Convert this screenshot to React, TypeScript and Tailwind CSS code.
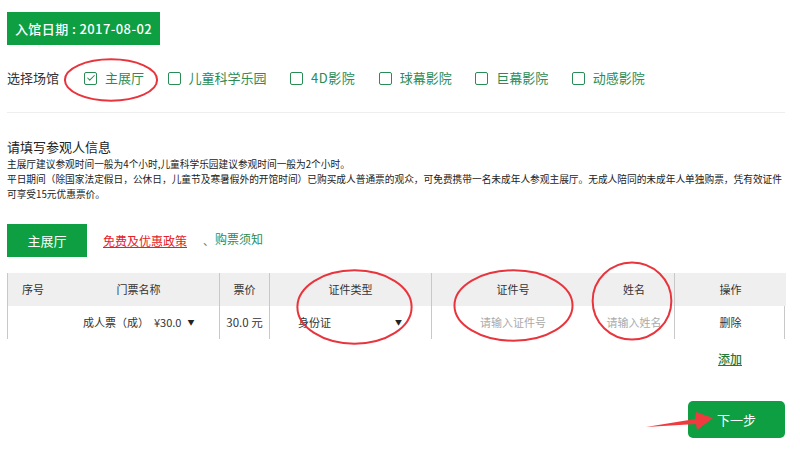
import { Check } from "lucide-react";

const halls = ["主展厅", "儿童科学乐园", "4D影院", "球幕影院", "巨幕影院", "动感影院"];

function Ring({ className }: { className: string }) {
  return (
    <svg className={`absolute pointer-events-none ${className}`} viewBox="0 0 100 100" preserveAspectRatio="none" fill="none">
      <ellipse cx="50" cy="50" rx="48" ry="47" stroke="#e8343c" strokeWidth="2" vectorEffect="non-scaling-stroke" />
    </svg>
  );
}

function Cell({ children, className = "" }: { children?: React.ReactNode; className?: string }) {
  return <div className={`flex items-center ${className}`}>{children}</div>;
}

export default function App() {
  return (
    <div className="relative w-[800px] h-[456px] overflow-hidden bg-white pl-[7px] pr-[15px] pt-3 text-[#333] font-['Noto_Sans_CJK_SC','Liberation_Sans',sans-serif]">
      <div className="flex h-[33px] w-[153px] items-center justify-center bg-[#0d9f42] text-[13px] font-medium tracking-[0.4px] text-white">
        入馆日期 : 2017-08-02
      </div>

      <div className="mt-[23px] flex h-[20px] items-center text-[13px]">
        <span className="mr-[25px]">选择场馆</span>
        <div className="flex items-center gap-x-[23.5px] text-[#2a8c55]">
          {halls.map((h, i) => (
            <label key={h} className={`flex items-center gap-[8px] ${i === 2 ? "tracking-[0.5px]" : ""}`}>
              <span className="flex h-[13px] w-[13px] items-center justify-center rounded-[2px] border border-[#2a8c55]">
                {i === 0 && <Check size={10} strokeWidth={2.5} />}
              </span>
              {h}
            </label>
          ))}
        </div>
      </div>

      <div className="mt-[24px] h-px bg-[#eeeeee]" />

      <h3 className="mt-[25px] h-[18px] text-[13px] leading-[18px] text-[#222]">请填写参观人信息</h3>
      <p className="mt-[1px] whitespace-nowrap text-[9.7px] leading-[15px] text-[#222]">
        主展厅建议参观时间一般为4个小时,儿童科学乐园建议参观时间一般为2个小时。
        <br />
        平日期间（除国家法定假日，公休日，儿童节及寒暑假外的开馆时间）已购买成人普通票的观众，可免费携带一名未成年人参观主展厅。无成人陪同的未成年人单独购票，凭有效证件
        <br />
        可享受15元优惠票价。
      </p>

      <div className="mt-[22px] flex h-[33px] items-center text-[12px]">
        <div className="flex h-full w-[80px] items-center justify-center bg-[#0d9f42] text-[13px] text-white">主展厅</div>
        <a className="ml-[16px] text-[#e4212b] underline">免费及优惠政策</a>
        <span className="ml-[16px] text-[11px] text-[#666]">、</span>
        <a className="ml-[1px] -mt-1 text-[#2a8c55]">购票须知</a>
      </div>

      <div className="mt-[16px] grid grid-cols-[50px_162px_50px_162px_162px_81px_111px] grid-rows-[33px_33px] border-x border-[#c8c8c8] text-[11px] text-[#333]">
        <Cell className="justify-center bg-[#efefef]">序号</Cell>
        <Cell className="justify-center bg-[#efefef] border-r border-[#c8c8c8]">门票名称</Cell>
        <Cell className="justify-center bg-[#efefef] border-r border-[#c8c8c8]">票价</Cell>
        <Cell className="justify-center bg-[#efefef] border-r border-[#c8c8c8]">证件类型</Cell>
        <Cell className="justify-center bg-[#efefef]">证件号</Cell>
        <Cell className="justify-center bg-[#efefef] border-r border-[#c8c8c8]">姓名</Cell>
        <Cell className="justify-center bg-[#efefef]">操作</Cell>

        <Cell />
        <Cell className="border-r border-[#c8c8c8] pl-[25px]">
          <span>成人票（成）</span>
          <span className="ml-[5px]">¥30.0</span>
          <span className="ml-[6px] text-[7px] text-[#222]">▼</span>
        </Cell>
        <Cell className="justify-center border-r border-[#c8c8c8] text-[11.5px]">30.0 元</Cell>
        <Cell className="justify-between border-r border-[#c8c8c8] pl-[28px] pr-[29px]">
          <span>身份证</span>
          <span className="text-[7px] text-[#222]">▼</span>
        </Cell>
        <Cell className="justify-center text-[#aaaaaa]">请输入证件号</Cell>
        <Cell className="justify-center border-r border-[#c8c8c8] text-[#aaaaaa]">请输入姓名</Cell>
        <Cell className="justify-center">删除</Cell>
      </div>

      <div className="mt-[11px] flex justify-end pr-[43px]">
        <a className="text-[12px] font-medium text-[#1f7a35] underline">添加</a>
      </div>

      <div className="mt-[33px] flex justify-end">
        <button className="h-[37px] w-[97px] rounded-[5px] bg-[#0d9f42] text-[13px] text-white">下一步</button>
      </div>

      <Ring className="left-[63px] top-[58px] h-[44px] w-[96px]" />
      <Ring className="left-[295px] top-[268px] h-[78px] w-[119px]" />
      <Ring className="left-[452px] top-[268px] h-[75px] w-[123px]" />
      <Ring className="left-[591px] top-[260px] h-[82px] w-[82px]" />

      <svg className="absolute left-[645px] top-[412px] pointer-events-none" width="70" height="20" viewBox="0 0 70 20">
        <path d="M1 15 L50 7 L51 0 L68 6 L52 18 L51 12 Z" fill="#ef3b3f" />
      </svg>
    </div>
  );
}
